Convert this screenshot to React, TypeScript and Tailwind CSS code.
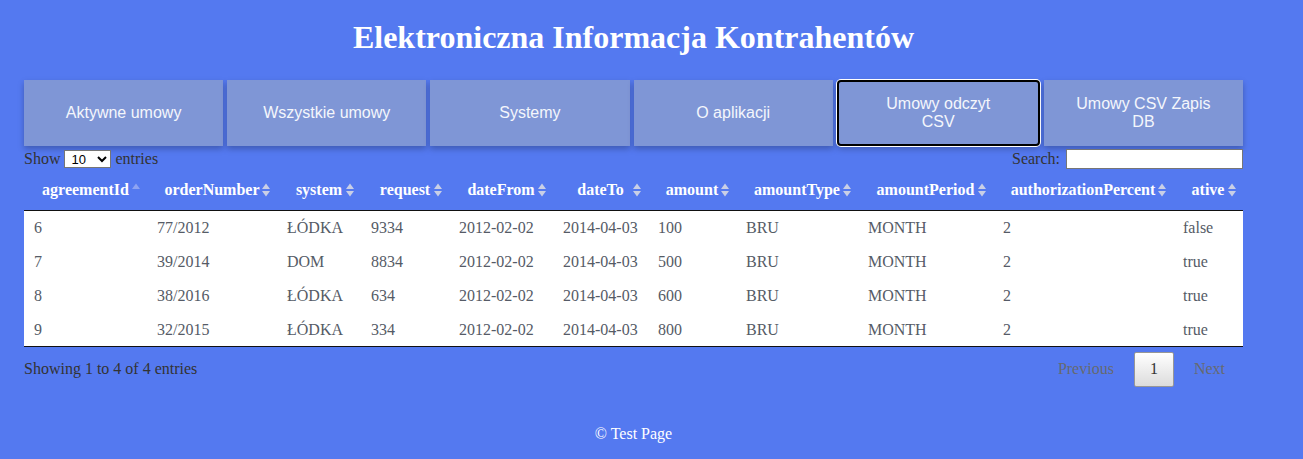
import React from 'react';

const tabs = ['Aktywne umowy', 'Wszystkie umowy', 'Systemy', 'O aplikacji', 'Umowy odczyt CSV', 'Umowy CSV Zapis DB'];

const columns = [
  { key: 'agreementId', w: 'w-[123px]' },
  { key: 'orderNumber', w: 'w-[130px]' },
  { key: 'system', w: 'w-[84px]' },
  { key: 'request', w: 'w-[88px]' },
  { key: 'dateFrom', w: 'w-[104px]' },
  { key: 'dateTo', w: 'w-[95px]' },
  { key: 'amount', w: 'w-[88px]' },
  { key: 'amountType', w: 'w-[122px]' },
  { key: 'amountPeriod', w: 'w-[135px]' },
  { key: 'authorizationPercent', w: 'w-[180px]' },
  { key: 'ative', w: 'w-[70px]' },
];

const rows = [
  ['6', '77/2012', 'ŁÓDKA', '9334', '2012-02-02', '2014-04-03', '100', 'BRU', 'MONTH', '2', 'false'],
  ['7', '39/2014', 'DOM', '8834', '2012-02-02', '2014-04-03', '500', 'BRU', 'MONTH', '2', 'true'],
  ['8', '38/2016', 'ŁÓDKA', '634', '2012-02-02', '2014-04-03', '600', 'BRU', 'MONTH', '2', 'true'],
  ['9', '32/2015', 'ŁÓDKA', '334', '2012-02-02', '2014-04-03', '800', 'BRU', 'MONTH', '2', 'true'],
];

function SortIcon({ asc }: { asc?: boolean }) {
  if (asc) {
    return (
      <svg width="8" height="15" viewBox="0 0 8 15" className="absolute right-[7px] top-1/2 -translate-y-1/2">
        <path d="M0 6.5 L4 1 L8 6.5 Z" fill="#8ea3f2" />
      </svg>
    );
  }
  return (
    <svg width="8" height="15" viewBox="0 0 8 15" className="absolute right-[7px] top-1/2 -translate-y-1/2">
      <path d="M0 6.5 L4 1 L8 6.5 Z" fill="#c9cfe6" />
      <path d="M0 8.5 L4 14 L8 8.5 Z" fill="#c9cfe6" />
    </svg>
  );
}

export default function App() {
  return (
    <div className="min-h-[459px] bg-[#5479f0] font-['Liberation_Serif',serif] text-[16px]">
      <div className="ml-[24px] w-[1219px]">
        {/* Header */}
        <div className="h-[80px] flex items-center justify-center pb-[6px]">
          <h1 className="text-[32px] font-bold text-white">Elektroniczna Informacja Kontrahentów</h1>
        </div>

        {/* Menu */}
        <div className="flex gap-1 h-[66px]">
          {tabs.map((t, i) => (
            <button
              key={t}
              className={
                'flex-1 px-8 bg-[#7f96d6] text-[#f4f6fc] font-["Liberation_Sans",Arial,sans-serif] text-[16px] leading-[18px] shadow-[0_3px_6px_rgba(0,0,0,0.25)] ' +
                (i === 4 ? 'border-2 border-black rounded-[4px] ring-1 ring-white' : '')
              }
            >
              {t}
            </button>
          ))}
        </div>

        {/* Controls */}
        <div className="flex items-center justify-between h-[25px] text-[#333]">
          <label className="flex items-center gap-1">
            Show
            <select className="h-[18px] w-[47px] bg-white border border-[#767676] text-[13px] text-black font-['Liberation_Sans',Arial,sans-serif] pl-[2px]" defaultValue="10">
              <option>10</option>
              <option>25</option>
              <option>50</option>
              <option>100</option>
            </select>
            entries
          </label>
          <label className="flex items-center gap-[6px]">
            Search:
            <input className="h-[20px] w-[177px] bg-white border border-[#767676]" />
          </label>
        </div>

        {/* Table */}
        <table className="w-[1219px] table-fixed border-collapse">
          <thead>
            <tr>
              {columns.map((c, i) => (
                <th key={c.key} className={c.w + ' relative h-[39px] px-[14px] text-center font-bold text-white whitespace-nowrap border-b border-[#111]'}>
                  {c.key}
                  <SortIcon asc={i === 0} />
                </th>
              ))}
            </tr>
          </thead>
          <tbody className="bg-white">
            {rows.map((r, ri) => (
              <tr key={ri} className={ri === rows.length - 1 ? 'border-b border-[#111]' : ''}>
                {r.map((v, ci) => (
                  <td key={ci} className="h-[34px] px-[10px] pt-[2px] text-left text-[#555b66] whitespace-nowrap">
                    {v}
                  </td>
                ))}
              </tr>
            ))}
          </tbody>
        </table>

        {/* Info + pagination */}
        <div className="flex items-center justify-between h-[44px] text-[#333]">
          <div>Showing 1 to 4 of 4 entries</div>
          <div className="flex items-center mr-[18px] pt-[1px]">
            <span className="pr-[20px] text-[#666a70]">Previous</span>
            <span className="w-[40px] h-[35px] flex items-center justify-center border border-[#979797] rounded-[2px] bg-gradient-to-b from-white to-[#dcdcdc] text-[#333]">1</span>
            <span className="pl-[20px] text-[#666a70]">Next</span>
          </div>
        </div>

        {/* Footer */}
        <div className="h-[86px] flex items-center justify-center text-white text-[16px]">© Test Page</div>
      </div>
    </div>
  );
}
